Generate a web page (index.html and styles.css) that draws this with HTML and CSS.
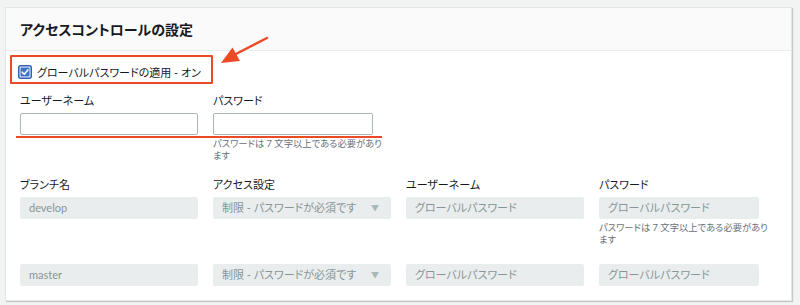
FILE: index.html
```html
<!DOCTYPE html>
<html lang="ja">
<head>
  <meta charset="UTF-8">
  <meta name="viewport" content="width=device-width, initial-scale=1.0">
  <title>アクセスコントロールの設定</title>
  <link rel="stylesheet" href="styles.css">
</head>
<body>
  <div class="card">
    <div class="card-header">
      <h2>アクセスコントロールの設定</h2>
    </div>

    <div class="card-body">
      <!-- Global password toggle -->
      <label class="toggle">
        <span class="check">
          <svg width="14" height="14" viewBox="0 0 14 14">
            <rect x="0.75" y="0.75" width="12.5" height="12.5" rx="2" fill="#eef3fb" stroke="#2f62b5" stroke-width="1.5"/>
            <rect x="2.5" y="2.5" width="9" height="9" rx="1" fill="#3a74d0"/>
            <path d="M4.2 7.2 L6.2 9.2 L9.9 4.9" fill="none" stroke="#fff" stroke-width="1.6" stroke-linecap="round" stroke-linejoin="round"/>
          </svg>
        </span>
        グローバルパスワードの適用 - オン
      </label>

      <div class="grid global-fields">
        <div class="field">
          <div class="label">ユーザーネーム</div>
          <input type="text" class="input">
        </div>
        <div class="field">
          <div class="label">パスワード</div>
          <input type="password" class="input short">
          <div class="help">パスワードは 7 文字以上である必要があります</div>
        </div>
      </div>

      <!-- Branch table -->
      <div class="grid branch-head">
        <div class="label">ブランチ名</div>
        <div class="label">アクセス設定</div>
        <div class="label">ユーザーネーム</div>
        <div class="label">パスワード</div>
      </div>

      <div class="grid branch-row">
        <div class="input disabled">develop</div>
        <div class="input disabled select">制限 - パスワードが必須です<span class="caret">▼</span></div>
        <div class="input disabled">グローバルパスワード</div>
        <div class="field">
          <div class="input disabled short">グローバルパスワード</div>
          <div class="help">パスワードは 7 文字以上である必要があります</div>
        </div>
      </div>

      <div class="grid branch-row last">
        <div class="input disabled">master</div>
        <div class="input disabled select">制限 - パスワードが必須です<span class="caret">▼</span></div>
        <div class="input disabled">グローバルパスワード</div>
        <div class="input disabled short">グローバルパスワード</div>
      </div>
    </div>

    <!-- Annotations drawn over the screenshot -->
    <div class="mark-box"></div>
    <div class="mark-line"></div>
    <svg class="mark-arrow" width="65" height="40" viewBox="0 0 65 40">
      <path d="M23 24 L56 7" stroke="#ec4a26" stroke-width="2.5" stroke-linecap="round"/>
      <polygon points="10,32 21.5,16.5 29,30" fill="#ec4a26"/>
    </svg>
  </div>
</body>
</html>
```

FILE: styles.css
```css
* {
  box-sizing: border-box;
}
body {
  margin: 0;
  padding: 7px 8px 8px 5px;
  background: #f2f3f3;
  font-family: Lato, "Noto Sans CJK JP", sans-serif;
  font-feature-settings: "palt";
  color: #16191f;
}
.card {
  position: relative;
  background: #fff;
  border: 1px solid #e4e6e6;
  box-shadow: 1px 1px 1px rgba(0, 0, 0, 0.18);
}
.card-header {
  height: 43px;
  padding: 0 14px;
  background: #fafafa;
  border-bottom: 1px solid #eaeded;
}
.card-header h2 {
  margin: 0;
  font-size: 14px;
  line-height: 42px;
  font-weight: bold;
  font-family: "Noto Sans CJK JP", sans-serif;
}
.card-body {
  padding: 11px 14px 14px;
}
.toggle {
  display: flex;
  align-items: center;
  gap: 5px;
  height: 20px;
  font-size: 11px;
  color: #16191f;
}
.check {
  display: flex;
  margin-left: -2px;
}
.grid {
  display: grid;
  grid-template-columns: repeat(4, 178px);
  column-gap: 15px;
}
.global-fields {
  margin-top: 11px;
  height: 69px;
}
.label {
  font-size: 11px;
  line-height: 16px;
  margin-bottom: 4px;
  color: #16191f;
}
.input {
  display: block;
  width: 100%;
  height: 22px;
  margin: 0;
  padding: 0 8px;
  border: 1px solid #aab7b8;
  border-radius: 2px;
  background: #fff;
  font-size: 11px;
  line-height: 20px;
  font-family: Lato, "Noto Sans CJK JP", sans-serif;
  font-feature-settings: "palt";
}
.input.short {
  width: 90%;
}
.input.disabled {
  border-color: #eaeded;
  background: #eaeded;
  color: #879596;
  white-space: nowrap;
}
.select {
  display: flex;
  justify-content: space-between;
}
.caret {
  font-size: 8px;
  color: #aab7b8;
  padding-right: 3px;
}
.help {
  margin-top: 3px;
  width: 175px;
  font-size: 9.3px;
  line-height: 12px;
  color: #687078;
}
.branch-head {
  margin-top: 15px;
}
.branch-row {
  height: 67px;
}
.branch-row.last {
  height: 22px;
}
.mark-box {
  position: absolute;
  left: 4px;
  top: 47px;
  width: 203px;
  height: 29px;
  border: 2px solid #ec4a26;
  border-radius: 1px;
}
.mark-line {
  position: absolute;
  left: 10px;
  top: 128px;
  width: 366px;
  height: 2px;
  background: #ec4a26;
}
.mark-arrow {
  position: absolute;
  left: 205px;
  top: 23px;
}
```
